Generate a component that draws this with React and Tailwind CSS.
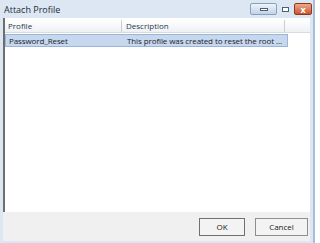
export default function App() {
  return (
    <div className="w-[320px] h-[243px] bg-white overflow-hidden" style={{ fontFamily: '"Open Sans", "Noto Sans", sans-serif' }}>
      <div className="w-[315px] h-[243px] flex flex-col bg-[#dce7f3] border-r-2 border-[#a9bed6]">
        {/* title bar */}
        <div className="h-[18px] flex items-center justify-between pl-[4px] pr-[1px]">
          <span className="text-[9px] text-[#1e2b3c] leading-none">Attach Profile</span>
          <div className="flex items-center gap-[2px]">
            <div className="w-[27px] h-[12px] rounded-[2px] border border-[#8aa0bb] bg-gradient-to-b from-[#eef3f9] to-[#c3d3e7] flex items-center justify-center">
              <div className="w-[8px] h-[3px] border border-[#4a5f7a] bg-white" />
            </div>
            <div className="w-[13px] h-[12px] flex items-center justify-center">
              <div className="w-[7px] h-[5px] border border-[#4a5f7a] bg-white" />
            </div>
            <div className="w-[18px] h-[12px] rounded-[2px] border border-[#8b3a20] bg-gradient-to-b from-[#eca98c] to-[#c9552e] flex items-center justify-center text-white text-[9px] font-bold leading-none">
              x
            </div>
          </div>
        </div>
        {/* list */}
        <div className="flex-1 mx-[3px] bg-white border-l-2 border-[#6e6e6e] flex flex-col pt-[2px]">
          <div className="h-[13px] flex text-[8px] text-[#2c3a4a] leading-none bg-gradient-to-b from-white to-[#eef0f3] border-b border-[#d5dbe3]">
            <div className="w-[117px] pl-[3px] flex items-center border-r border-[#c8ced6]">Profile</div>
            <div className="w-[163px] pl-[4px] flex items-center border-r border-[#c8ced6]">Description</div>
            <div className="flex-1" />
          </div>
          <div className="mt-[1px] h-[13px] w-[283px] flex items-center text-[8px] text-[#1a2330] leading-none bg-[#c7d8ee] border border-[#9bb5d8] tracking-[-0.1px]">
            <div className="w-[117px] pl-[3px]">Password_Reset</div>
            <div className="pl-[4px] whitespace-nowrap">This profile was created to reset the root ...</div>
          </div>
        </div>
        {/* footer */}
        <div className="h-[29px] bg-[#f0f0f0] mx-[3px] mb-[2px] flex items-center justify-end gap-[10px] pr-[2px]">
          <button className="w-[46px] h-[18px] border border-[#707070] bg-[#f3f3f3] text-[8px] text-[#222] leading-none">OK</button>
          <button className="w-[53px] h-[18px] border border-[#8e8e8e] bg-[#f3f3f3] text-[8px] text-[#222] leading-none">Cancel</button>
        </div>
      </div>
    </div>
  );
}
